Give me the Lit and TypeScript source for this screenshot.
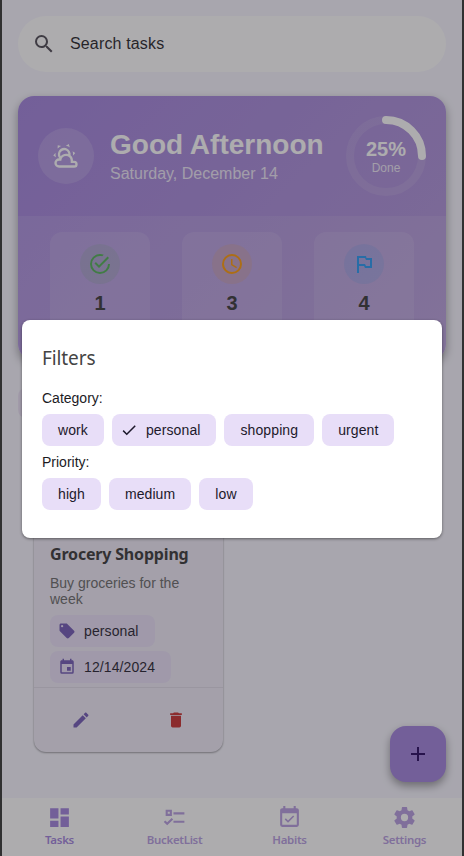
import { LitElement, html, css, svg } from "lit";
import { customElement } from "lit/decorators.js";

const P: Record<string, string> = {
  search: "M9.5,3A6.5,6.5 0 0,1 16,9.5C16,11.11 15.41,12.59 14.44,13.73L14.71,14H15.5L20.5,19L19,20.5L14,15.5V14.71L13.73,14.44C12.59,15.41 11.11,16 9.5,16A6.5,6.5 0 0,1 3,9.5A6.5,6.5 0 0,1 9.5,3M9.5,5C7,5 5,7 5,9.5C5,12 7,14 9.5,14C12,14 14,12 14,9.5C14,7 12,5 9.5,5Z",
  weather: "M12.74,5.47C15.1,6.5 16.35,9.03 15.92,11.46C17.19,12.56 18,14.19 18,16V16.17C18.31,16.06 18.65,16 19,16A3,3 0 0,1 22,19A3,3 0 0,1 19,22H6A4,4 0 0,1 2,18A4,4 0 0,1 6,14H6.27C5,12.45 4.6,10.24 5.5,8.26C6.72,5.5 9.97,4.24 12.74,5.47M11.93,7.3C10.16,6.5 8.09,7.31 7.31,9.07C6.85,10.09 6.93,11.22 7.41,12.13C8.5,10.83 10.16,10 12,10C12.7,10 13.38,10.12 14,10.34C13.94,9.06 13.18,7.86 11.93,7.3M13.55,3.64C13,3.4 12.45,3.23 11.88,3.12L14.37,1.82L15.27,4.71C14.76,4.29 14.19,3.93 13.55,3.64M6.09,4.44C5.6,4.79 5.17,5.19 4.8,5.63L4.91,2.82L7.87,3.5C7.25,3.71 6.65,4.03 6.09,4.44M18,9.71C17.91,9.12 17.78,8.55 17.59,8L19.97,9.5L17.92,11.73C18.03,11.08 18.05,10.4 18,9.71M3.04,11.3C3.11,11.9 3.24,12.47 3.43,13L1.06,11.5L3.1,9.28C3,9.93 2.97,10.61 3.04,11.3M19,18H16V16A4,4 0 0,0 12,12A4,4 0 0,0 8,16H6A2,2 0 0,0 4,18A2,2 0 0,0 6,20H19A1,1 0 0,0 20,19A1,1 0 0,0 19,18Z",
  done: "M20,12A8,8 0 0,1 12,20A8,8 0 0,1 4,12A8,8 0 0,1 12,4C12.76,4 13.5,4.11 14.2,4.31L15.77,2.74C14.61,2.26 13.34,2 12,2A10,10 0 0,0 2,12A10,10 0 0,0 12,22A10,10 0 0,0 22,12M7.91,10.08L6.5,11.5L11,16L21,6L19.59,4.58L11,13.17L7.91,10.08Z",
  clock: "M12,20A8,8 0 0,0 20,12A8,8 0 0,0 12,4A8,8 0 0,0 4,12A8,8 0 0,0 12,20M12,2A10,10 0 0,1 22,12A10,10 0 0,1 12,22C6.47,22 2,17.5 2,12A10,10 0 0,1 12,2M12.5,7V12.25L17,14.92L16.25,16.15L11,13V7H12.5Z",
  flag: "M14.5,6L14,4H5V21H7V14H12L13,16H20V6H14.5M18,14H14L13,12H7V6H13L14,8H18V14Z",
  tag: "M5.5,7A1.5,1.5 0 0,1 4,5.5A1.5,1.5 0 0,1 5.5,4A1.5,1.5 0 0,1 7,5.5A1.5,1.5 0 0,1 5.5,7M21.41,11.58L12.41,2.58C12.05,2.22 11.55,2 11,2H4C2.89,2 2,2.89 2,4V11C2,11.55 2.22,12.05 2.59,12.41L11.58,21.41C11.95,21.77 12.45,22 13,22C13.55,22 14.05,21.77 14.41,21.41L21.41,14.41C21.78,14.05 22,13.55 22,13C22,12.44 21.77,11.94 21.41,11.58Z",
  calendar: "M19,19H5V8H19M16,1V3H8V1H6V3H5C3.89,3 3,3.89 3,5V19A2,2 0 0,0 5,21H19A2,2 0 0,0 21,19V5C21,3.89 20.1,3 19,3H18V1M17,12H12V17H17V12Z",
  pencil: "M20.71,7.04C21.1,6.65 21.1,6 20.71,5.63L18.37,3.29C18,2.9 17.35,2.9 16.96,3.29L15.12,5.12L18.87,8.87M3,17.25V21H6.75L17.81,9.93L14.06,6.18L3,17.25Z",
  trash: "M19,4H15.5L14.5,3H9.5L8.5,4H5V6H19M6,19A2,2 0 0,0 8,21H16A2,2 0 0,0 18,19V7H6V19Z",
  check: "M21,7L9,19L3.5,13.5L4.91,12.09L9,16.17L19.59,5.59L21,7Z",
  plus: "M19,13H13V19H11V13H5V11H11V5H13V11H19V13Z",
  dashboard: "M13,3V9H21V3M13,21H21V11H13M3,21H11V15H3M3,13H11V3H3V13Z",
  list: "M3.5,4.5H9.5V10.5H3.5V4.5M5.5,6.5V8.5H7.5V6.5H5.5M11,7H21.5V9H11V7M11,15H21.5V17H11V15M5,19.5L1.7,16.2L3.11,14.79L5,16.67L9.29,12.39L10.7,13.8L5,19.5Z",
  habits: "M19,19H5V8H19M19,3H18V1H16V3H8V1H6V3H5C3.89,3 3,3.9 3,5V19A2,2 0 0,0 5,21H19A2,2 0 0,0 21,19V5A2,2 0 0,0 19,3M16.53,11.06L15.47,10L10.59,14.88L8.47,12.76L7.41,13.82L10.59,17L16.53,11.06Z",
  cog: "M12,15.5A3.5,3.5 0 0,1 8.5,12A3.5,3.5 0 0,1 12,8.5A3.5,3.5 0 0,1 15.5,12A3.5,3.5 0 0,1 12,15.5M19.43,12.97C19.47,12.65 19.5,12.33 19.5,12C19.5,11.67 19.47,11.34 19.43,11L21.54,9.37C21.73,9.22 21.78,8.95 21.66,8.73L19.66,5.27C19.54,5.05 19.27,4.96 19.05,5.05L16.56,6.05C16.04,5.66 15.5,5.32 14.87,5.07L14.5,2.42C14.46,2.18 14.25,2 14,2H10C9.75,2 9.54,2.18 9.5,2.42L9.13,5.07C8.5,5.32 7.96,5.66 7.44,6.05L4.95,5.05C4.73,4.96 4.46,5.05 4.34,5.27L2.34,8.73C2.21,8.95 2.27,9.22 2.46,9.37L4.57,11C4.53,11.34 4.5,11.67 4.5,12C4.5,12.33 4.53,12.65 4.57,12.97L2.46,14.63C2.27,14.78 2.21,15.05 2.34,15.27L4.34,18.73C4.46,18.95 4.73,19.03 4.95,18.95L7.44,17.94C7.96,18.34 8.5,18.68 9.13,18.93L9.5,21.58C9.54,21.82 9.75,22 10,22H14C14.25,22 14.46,21.82 14.5,21.58L14.87,18.93C15.5,18.67 16.04,18.34 16.56,17.94L19.05,18.95C19.27,19.03 19.54,18.95 19.66,18.73L21.66,15.27C21.78,15.05 21.73,14.78 21.54,14.63L19.43,12.97Z",
};

const icon = (name: string, size: number) => html`<svg
  width=${size} height=${size} viewBox="0 0 24 24" fill="currentColor" fill-rule="evenodd"
>${svg`<path d=${P[name]}></path>`}</svg>`;

@customElement("app-root")
export class AppRoot extends LitElement {
  static styles = css`
    :host {
      display: block;
      font-family: "Liberation Sans", Arial, sans-serif;
      color: #1c1b1f;
    }
    * { box-sizing: border-box; }
    svg { display: block; flex: none; }
    .window {
      position: relative;
      height: 856px;
      padding: 0 2px;
      background: #303031;
      overflow: hidden;
    }
    .screen {
      height: 856px;
      display: flex;
      flex-direction: column;
      background: #f7f6ff;
      position: relative;
      overflow: hidden;
    }
    .content {
      flex: 1;
      min-height: 0;
      overflow: hidden;
      padding: 16px 16px 0;
    }
    .search {
      height: 56px;
      border-radius: 28px;
      background: #fff;
      display: flex;
      align-items: center;
      padding-left: 14px;
      gap: 14px;
      font-size: 16px;
      letter-spacing: 0.15px;
      color: #1c1b1f;
    }
    .search svg { color: #49454f; }
    .hero {
      margin-top: 24px;
      height: 264px;
      border-radius: 16px;
      overflow: hidden;
      background: linear-gradient(135deg, #9f7fdd, #b094d8);
    }
    .heroshadow {
      border-radius: 16px;
      box-shadow: 0 4px 10px rgba(0, 0, 0, 0.38);
    }
    .top {
      height: 120px;
      padding: 0 20px;
      display: flex;
      align-items: center;
      color: #fff;
    }
    .sun {
      width: 56px;
      height: 56px;
      border-radius: 50%;
      background: rgba(255, 255, 255, 0.15);
      display: grid;
      place-items: center;
    }
    .greet { flex: 1; padding: 0 0 1px 16px; white-space: nowrap; }
    .hello { font-size: 28px; font-weight: 700; line-height: 32px; }
    .date { font-size: 16px; line-height: 18px; margin-top: 4px; opacity: 0.8; }
    .ring { display: grid; width: 80px; height: 80px; }
    .ring > * { grid-area: 1 / 1; }
    .ringtext {
      display: flex;
      flex-direction: column;
      align-items: center;
      justify-content: center;
      padding-top: 1px;
    }
    .pct { font-size: 20px; font-weight: 700; line-height: 22px; }
    .lbl { font-size: 12px; line-height: 14px; margin-top: 1px; opacity: 0.8; }
    .stats {
      height: 144px;
      padding: 16px 32px;
      display: flex;
      gap: 32px;
      background: rgba(255, 255, 255, 0.1);
    }
    .stat {
      flex: 1;
      border-radius: 12px;
      background: rgba(255, 255, 255, 0.1);
      display: flex;
      flex-direction: column;
      align-items: center;
      padding-top: 12px;
    }
    .dot { width: 40px; height: 40px; border-radius: 50%; display: grid; place-items: center; }
    .green { color: #4caf50; background: rgba(76, 175, 80, 0.125); }
    .orange { color: #ff9800; background: rgba(255, 152, 0, 0.125); }
    .blue { color: #2196f3; background: rgba(33, 150, 243, 0.125); }
    .num { margin-top: 8px; font-size: 20px; line-height: 22px; font-weight: 700; color: #333; }
    .pill {
      margin-top: 28px;
      width: 90px;
      height: 30px;
      border-radius: 8px;
      background: #ece2f7;
    }
    .task {
      margin: 22px 0 0 16px;
      width: 189px;
      height: 312px;
      border-radius: 12px;
      background: #f0ecf8;
      box-shadow: 0 1px 2px rgba(0, 0, 0, 0.35), 0 0 2px rgba(0, 0, 0, 0.12);
      display: flex;
      flex-direction: column;
    }
    .body { flex: 1; padding: 102px 16px 0; }
    .title {
      font-family: "Noto Sans", "Open Sans", sans-serif;
      font-weight: 700;
      font-size: 16px;
      line-height: 24px;
      letter-spacing: -0.18px;
      color: #333;
      white-space: nowrap;
    }
    .desc { margin-top: 9px; font-size: 14px; line-height: 16px; color: #666; }
    .chip {
      display: flex;
      align-items: center;
      width: max-content;
      height: 32px;
      border-radius: 8px;
      background: #e8def8;
      padding: 0 16px;
      font-size: 14px;
      letter-spacing: 0.1px;
      color: #1d192b;
    }
    .meta { padding: 0 16px 0 8px; gap: 8px; background: #e9e0f8; margin-bottom: 4px; }
    .meta svg { color: #6f56b4; }
    .first { margin-top: 8px; }
    .actions {
      height: 65px;
      border-top: 1px solid #dfdae8;
      display: flex;
    }
    .actions span { flex: 1; display: grid; place-items: center; color: #6f56b4; }
    .actions .del { color: #c62828; }
    .nav { height: 58px; background: #fff; display: flex; }
    .item {
      flex: 1;
      display: flex;
      flex-direction: column;
      align-items: center;
      padding-top: 7px;
      font-family: "Noto Sans", "Open Sans", sans-serif;
      font-size: 11.5px;
      font-weight: 600;
      line-height: 16px;
      letter-spacing: -0.3px;
      color: #b49adf;
    }
    .active { color: #9f7fdd; }
    .item span { margin-top: 2px; }
    .fab {
      position: absolute;
      right: 16px;
      bottom: 74px;
      width: 56px;
      height: 56px;
      border-radius: 16px;
      background: #9f7fdd;
      color: #21005d;
      display: grid;
      place-items: center;
      box-shadow: 0 4px 8px rgba(0, 0, 0, 0.4);
    }
    .scrim {
      position: absolute;
      inset: 0;
      background: rgba(50, 48, 53, 0.4);
      padding: 320px 20px 0;
    }
    .modal {
      height: 218px;
      border-radius: 8px;
      background: #fff;
      padding: 24px 20px 0;
      box-shadow: 0 1px 3px rgba(0, 0, 0, 0.45);
    }
    .heading {
      font-family: "Noto Sans", "Open Sans", sans-serif;
      font-size: 19px;
      font-weight: 400;
      line-height: 28px;
      letter-spacing: -0.1px;
      color: #444;
    }
    .cap { font-size: 14px; line-height: 16px; margin-top: 18px; }
    .second { margin-top: 8px; }
    .row { display: flex; gap: 8px; margin-top: 8px; }
    .on { padding-left: 8px; gap: 8px; }
  `;

  render() {
    return html`
      <div class="window">
        <div class="screen">
          <div class="content">
            <div class="search">${icon("search", 24)}<span>Search tasks</span></div>
            <div class="heroshadow">
              <div class="hero">
                <div class="top">
                  <div class="sun">${icon("weather", 28)}</div>
                  <div class="greet">
                    <div class="hello">Good Afternoon</div>
                    <div class="date">Saturday, December 14</div>
                  </div>
                  <div class="ring">
                    <svg width="80" height="80" viewBox="0 0 80 80" fill="none" stroke="#fff" stroke-width="8">
                      <circle cx="40" cy="40" r="36" stroke-opacity="0.1"></circle>
                      <path d="M40,4A36,36 0 0,1 76,40" stroke-linecap="round"></path>
                    </svg>
                    <div class="ringtext"><span class="pct">25%</span><span class="lbl">Done</span></div>
                  </div>
                </div>
                <div class="stats">
                  <div class="stat"><div class="dot green">${icon("done", 24)}</div><div class="num">1</div></div>
                  <div class="stat"><div class="dot orange">${icon("clock", 24)}</div><div class="num">3</div></div>
                  <div class="stat"><div class="dot blue">${icon("flag", 24)}</div><div class="num">4</div></div>
                </div>
              </div>
            </div>
            <div class="pill"></div>
            <div class="task">
              <div class="body">
                <div class="title">Grocery Shopping</div>
                <div class="desc">Buy groceries for the week</div>
                <div class="chip meta first">${icon("tag", 18)}<span>personal</span></div>
                <div class="chip meta">${icon("calendar", 18)}<span>12/14/2024</span></div>
              </div>
              <div class="actions"><span>${icon("pencil", 20)}</span><span class="del">${icon("trash", 20)}</span></div>
            </div>
          </div>
          <div class="nav">
            <div class="item active">${icon("dashboard", 25)}<span>Tasks</span></div>
            <div class="item">${icon("list", 25)}<span>BucketList</span></div>
            <div class="item">${icon("habits", 25)}<span>Habits</span></div>
            <div class="item">${icon("cog", 25)}<span>Settings</span></div>
          </div>
          <div class="fab">${icon("plus", 24)}</div>
          <div class="scrim">
            <div class="modal">
              <div class="heading">Filters</div>
              <div class="cap">Category:</div>
              <div class="row">
                <div class="chip">work</div>
                <div class="chip on">${icon("check", 18)}<span>personal</span></div>
                <div class="chip">shopping</div>
                <div class="chip">urgent</div>
              </div>
              <div class="cap second">Priority:</div>
              <div class="row">
                <div class="chip">high</div>
                <div class="chip">medium</div>
                <div class="chip">low</div>
              </div>
            </div>
          </div>
        </div>
      </div>
    `;
  }
}
